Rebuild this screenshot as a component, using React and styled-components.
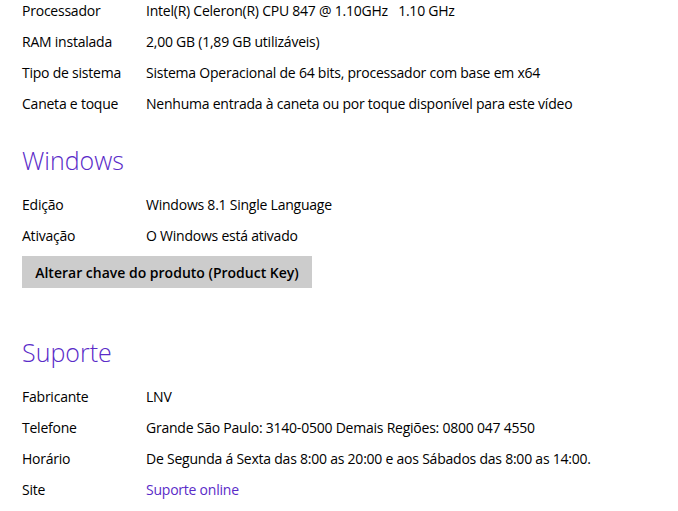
import React from "react";
import styled, { createGlobalStyle } from "styled-components";

const GlobalStyle = createGlobalStyle`
  html, body {
    margin: 0;
    padding: 0;
    background: #ffffff;
  }
  body {
    font-family: "Open Sans", "Noto Sans", sans-serif;
    color: #000000;
  }
`;

const accent = "#5a2bc8";

// the view is scrolled a little, so the first row starts above the edge
const Page = styled.div`
  width: 678px;
  height: 516px;
  margin-top: -5px;
  overflow: hidden;
  padding: 0 22px;
  box-sizing: border-box;
`;

const Section = styled.section`
  display: flex;
  flex-direction: column;
  margin-bottom: ${({ gap }) => gap || 0}px;
`;

const Heading = styled.h2`
  margin: 0;
  height: 59px;
  display: flex;
  align-items: center;
  font-size: 25px;
  font-weight: 300;
  color: ${accent};
`;

const Row = styled.div`
  display: grid;
  grid-template-columns: 124px 1fr;
  height: 31px;
  align-items: center;
  font-size: 14px;
  letter-spacing: -0.23px;
  white-space: pre;
`;

const Label = styled.span`
  color: #000;
`;

const Value = styled.span`
  color: ${({ link }) => (link ? accent : "#000")};
  cursor: ${({ link }) => (link ? "pointer" : "default")};
`;

const Button = styled.button`
  align-self: flex-start;
  margin-top: 5px;
  width: 290px;
  height: 32px;
  border: none;
  background: #cccccc;
  font-family: inherit;
  font-size: 14px;
  font-weight: 600;
  color: #000;
  cursor: pointer;
`;

const system = [
  ["Processador", "Intel(R) Celeron(R) CPU 847 @ 1.10GHz   1.10 GHz"],
  ["RAM instalada", "2,00 GB (1,89 GB utilizáveis)"],
  ["Tipo de sistema", "Sistema Operacional de 64 bits, processador com base em x64"],
  ["Caneta e toque", "Nenhuma entrada à caneta ou por toque disponível para este vídeo"],
];

const windows = [
  ["Edição", "Windows 8.1 Single Language"],
  ["Ativação", "O Windows está ativado"],
];

const support = [
  ["Fabricante", "LNV"],
  ["Telefone", "Grande São Paulo: 3140-0500 Demais Regiões: 0800 047 4550"],
  ["Horário", "De Segunda á Sexta das 8:00 as 20:00 e aos Sábados das 8:00 as 14:00."],
];

function InfoRow({ label, value, link }) {
  return (
    <Row>
      <Label>{label}</Label>
      <Value link={link}>{value}</Value>
    </Row>
  );
}

export default function App() {
  return (
    <>
      <GlobalStyle />
      <Page>
        <Section gap={11}>
          {system.map(([l, v]) => (
            <InfoRow key={l} label={l} value={v} />
          ))}
        </Section>
        <Section gap={34}>
          <Heading>Windows</Heading>
          {windows.map(([l, v]) => (
            <InfoRow key={l} label={l} value={v} />
          ))}
          <Button>Alterar chave do produto (Product Key)</Button>
        </Section>
        <Section>
          <Heading>Suporte</Heading>
          {support.map(([l, v]) => (
            <InfoRow key={l} label={l} value={v} />
          ))}
          <InfoRow label="Site" value="Suporte online" link />
        </Section>
      </Page>
    </>
  );
}
